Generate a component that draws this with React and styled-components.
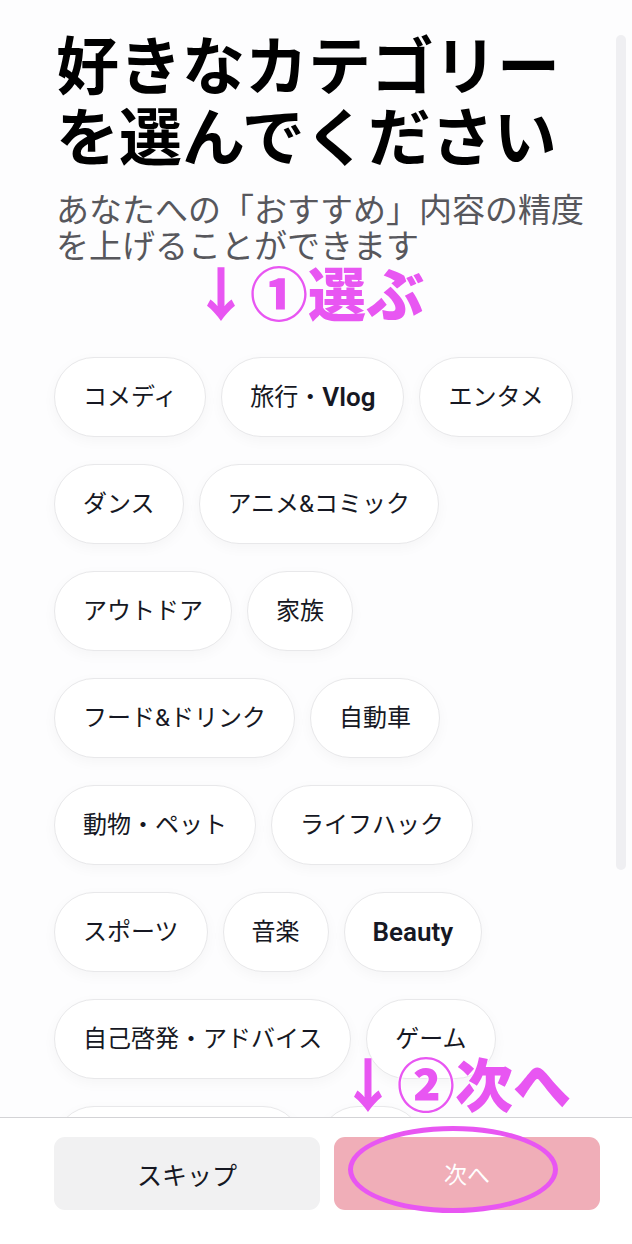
import React from "react";
import styled, { createGlobalStyle } from "styled-components";

const GlobalStyle = createGlobalStyle`
  html, body {
    margin: 0;
    padding: 0;
    background: #fdfdfe;
  }
  body {
    font-family: "Noto Sans CJK JP", "Noto Sans", sans-serif;
    color: #161823;
  }
`;

const Screen = styled.div`
  position: relative;
  height: 1244px;
  display: flex;
  flex-direction: column;
  overflow: hidden;
`;

const Scroller = styled.div`
  flex: 1;
  overflow: hidden;
  padding: 26px 32px 0 56px;
`;

const ScrollThumb = styled.div`
  position: absolute;
  top: 35px;
  right: 6px;
  width: 10px;
  height: 835px;
  border-radius: 5px;
  background: #efeff2;
`;

const Title = styled.h1`
  margin: 0;
  font-size: 63px;
  line-height: 71px;
  font-weight: 700;
  color: #000;
`;

const Subtitle = styled.p`
  margin: 22px 0 0;
  font-size: 33px;
  line-height: 36px;
  font-weight: 400;
  color: #57575c;
`;

const Note = styled.div`
  font-family: "Noto Sans CJK JP", sans-serif;
  font-weight: 900;
  font-size: 58px;
  line-height: 62px;
  color: #e856f2;
  white-space: nowrap;
`;

const PickNote = styled(Note)`
  margin: -2px 0 0 136px;
`;

const NextNote = styled(Note)`
  position: absolute;
  left: 339px;
  top: 1051px;
  text-shadow: 0 0 3px #fff, 0 0 3px #fff;
`;

const ChipGrid = styled.div`
  margin: 35px 0 0 -2px;
  display: flex;
  flex-wrap: wrap;
  gap: 27px 15px;
`;

const Chip = styled.button`
  height: 80px;
  padding: 0 28px;
  border: 1px solid #e8e8ea;
  border-radius: 40px;
  background: #fff;
  box-shadow: 0 4px 14px rgba(0, 0, 0, 0.035);
  font-family: "Roboto", "Noto Sans CJK JP", sans-serif;
  font-size: 24px;
  line-height: 1;
  color: #161823;
  display: flex;
  align-items: center;
  white-space: nowrap;
`;

const Latin = styled.span`
  font-size: 26px;
  font-weight: 600;
`;

const Footer = styled.div`
  flex: none;
  height: 127px;
  border-top: 1px solid #d3d3d6;
  background: #fff;
  display: flex;
  gap: 14px;
  padding: 19px 32px 0 54px;
  box-sizing: border-box;
`;

const Button = styled.button`
  position: relative;
  flex: 1;
  height: 73px;
  border: none;
  border-radius: 11px;
  background: ${(p) => (p.$primary ? "#f0aeb8" : "#f1f1f2")};
  color: ${(p) => (p.$primary ? "#fff" : "#161823")};
  font-family: "Noto Sans CJK JP", sans-serif;
  font-size: ${(p) => (p.$primary ? "23px" : "25px")};
  line-height: 1.2;
  display: flex;
  align-items: center;
  justify-content: center;
`;

const Ring = styled.span`
  position: absolute;
  left: 14px;
  top: -11px;
  width: 210px;
  height: 87px;
  box-sizing: border-box;
  border: 5px solid #e856f2;
  border-radius: 50%;
  pointer-events: none;
`;

const categories = [
  ["コメディ"],
  ["旅行・", <Latin key="v">Vlog</Latin>],
  ["エンタメ"],
  ["ダンス"],
  ["アニメ&コミック"],
  ["アウトドア"],
  ["家族"],
  ["フード&ドリンク"],
  ["自動車"],
  ["動物・ペット"],
  ["ライフハック"],
  ["スポーツ"],
  ["音楽"],
  [<Latin key="b">Beauty</Latin>],
  ["自己啓発・アドバイス"],
  ["ゲーム"],
  ["アート・デザイン"],
  ["教育"],
];

export default function App() {
  return (
    <Screen>
      <GlobalStyle />
      <Scroller>
        <Title>
          好きなカテゴリー
          <br />
          を選んでください
        </Title>
        <Subtitle>
          あなたへの「おすすめ」内容の精度
          <br />
          を上げることができます
        </Subtitle>
        <PickNote>↓①選ぶ</PickNote>
        <ChipGrid>
          {categories.map((c, i) => (
            <Chip key={i}>{c}</Chip>
          ))}
        </ChipGrid>
      </Scroller>
      <ScrollThumb />
      <NextNote>↓②次へ</NextNote>
      <Footer>
        <Button>スキップ</Button>
        <Button $primary>
          次へ
          <Ring />
        </Button>
      </Footer>
    </Screen>
  );
}
